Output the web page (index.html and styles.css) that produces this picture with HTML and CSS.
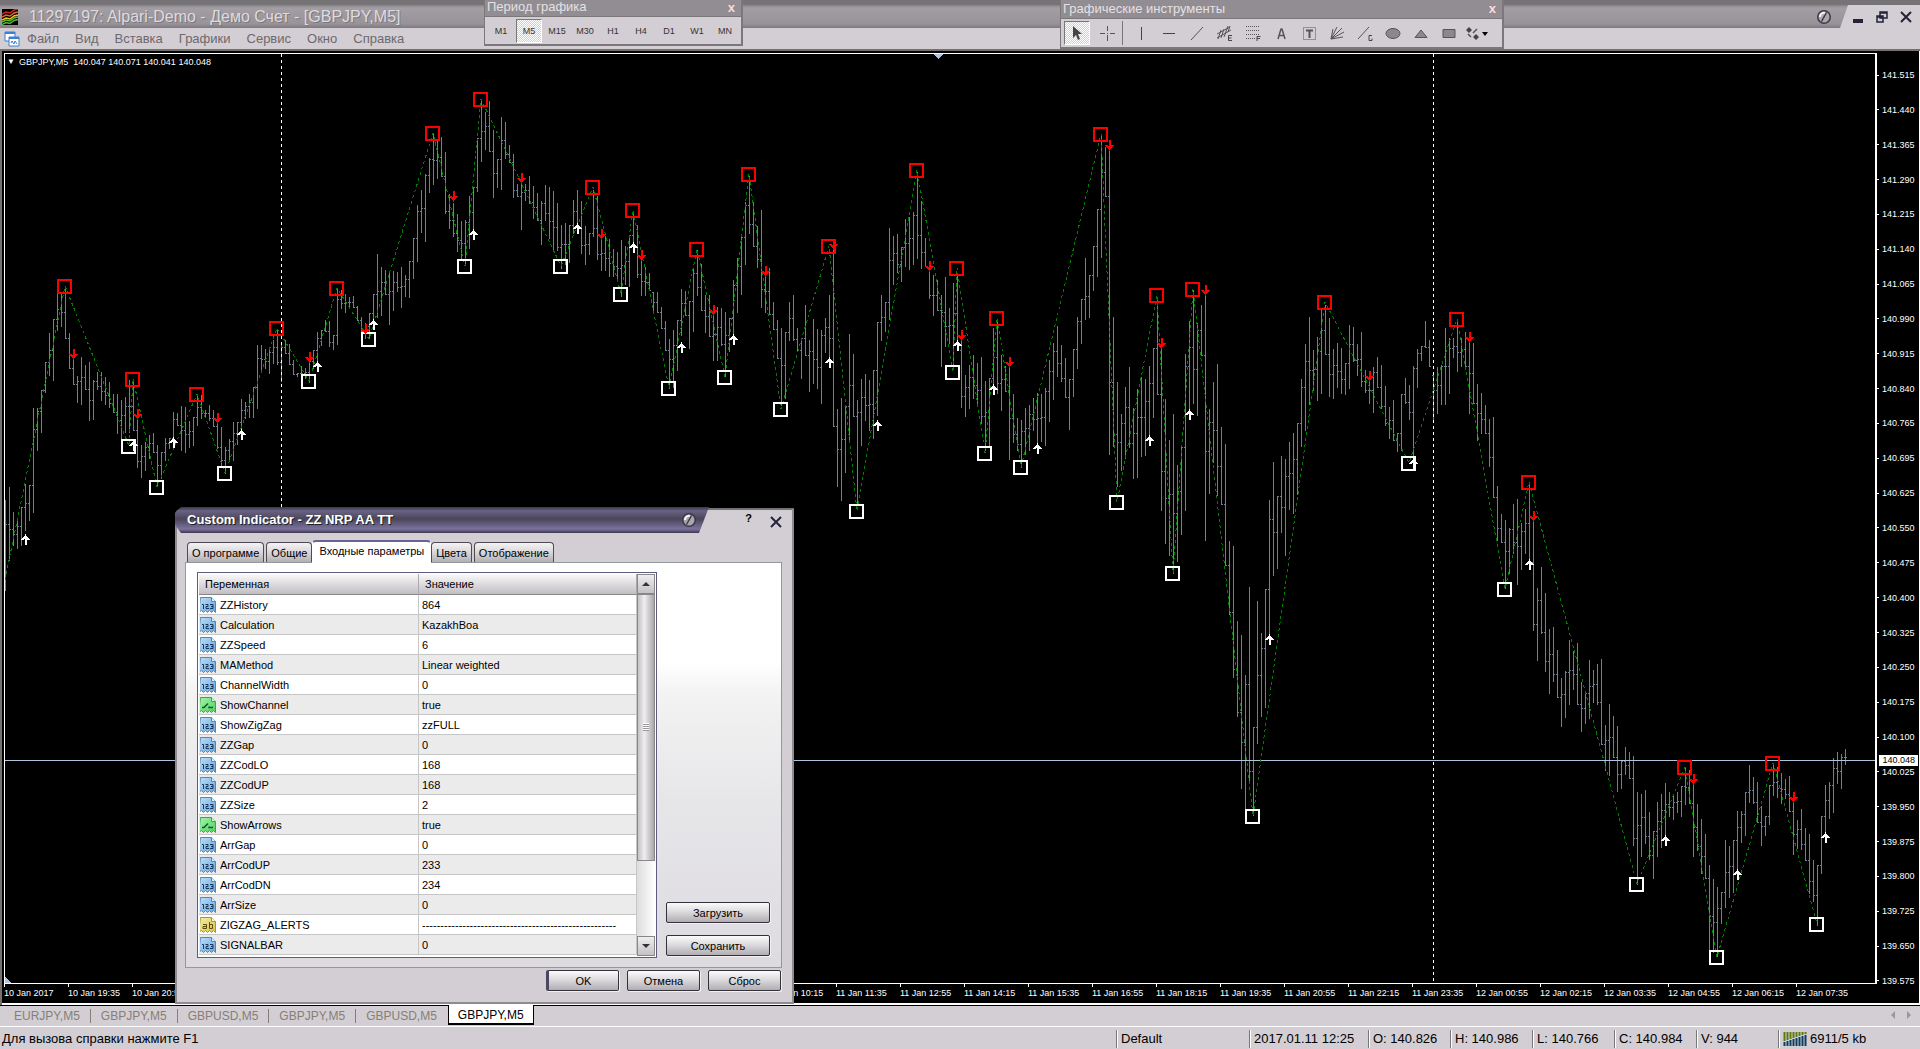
FILE: index.html
```html
<!DOCTYPE html>
<html lang="ru">
<head>
<meta charset="utf-8">
<title>11297197: Alpari-Demo - Демо Счет - [GBPJPY,M5]</title>
<link rel="stylesheet" href="styles.css">
</head>
<body>
<svg class="defs" aria-hidden="true">
  <defs>
    <linearGradient id="g-blue" x1="0" y1="0" x2="1" y2="1"><stop offset="0" stop-color="#bfe0f8"/><stop offset="1" stop-color="#6aa5da"/></linearGradient>
    <linearGradient id="g-green" x1="0" y1="0" x2="1" y2="1"><stop offset="0" stop-color="#a6f5ac"/><stop offset="1" stop-color="#4fcf62"/></linearGradient>
    <linearGradient id="g-yellow" x1="0" y1="0" x2="1" y2="1"><stop offset="0" stop-color="#f6efa8"/><stop offset="1" stop-color="#d6c350"/></linearGradient>
    <symbol id="i-num" viewBox="0 0 16 16"><path d="M.5.5h11l4 4v11l-2-2-2 2-2-2-2 2-2-2-2 2-2-2-3 2z" fill="url(#g-blue)" stroke="#4c87bd"/><path d="M11.500.5v4h4" fill="#e6f4ff" stroke="#4c87bd"/><path d="M2 7.500h1.500v4.500M5.500 7.500h2.500v2h-2v2h3M10 7.500h3v4h-3M11 9.500h2" fill="none" stroke="#17375c"/></symbol>
    <symbol id="i-bool" viewBox="0 0 16 16"><path d="M.5.5h11l4 4v11l-2-2-2 2-2-2-2 2-2-2-2 2-2-2-3 2z" fill="url(#g-green)" stroke="#35a94a"/><path d="M11.500.5v4h4" fill="#dfffe2" stroke="#35a94a"/><path d="M2 10.500h2l4-4M9 9.500v1h4" fill="none" stroke="#0b5c1e" stroke-width="1.500"/></symbol>
    <symbol id="i-str" viewBox="0 0 16 16"><path d="M.5.5h11l4 4v11l-2-2-2 2-2-2-2 2-2-2-2 2-2-2-3 2z" fill="url(#g-yellow)" stroke="#a8952f"/><path d="M11.500.5v4h4" fill="#fffbd6" stroke="#a8952f"/><path d="M3 7.500h3.500v4h-3.500v-2h3M9.500 5v6.500h3v-4h-3" fill="none" stroke="#5c4a0b"/></symbol>
    <symbol id="i-screw" viewBox="0 0 16 16"><circle cx="8" cy="8" r="7" fill="#3b3748"/><circle cx="8" cy="8" r="5.500" fill="#a9a7ab"/><path d="M4 8a4 4 0 0 1 5-4" stroke="#f4f4f4" stroke-width="2" fill="none"/><path d="M10.500 3.500 5.500 12.500" stroke="#3b3748" stroke-width="1.500"/></symbol>
  </defs>
</svg>

<header class="titlebar">
  <div class="caption">
    <svg class="applogo" viewBox="0 0 16 16"><path d="M0 0h16v16H0z" fill="#000"/><g fill="none" stroke-width="1.500"><path d="M0 5l4-2 4 1 4-3 4-1" stroke="#d4241c"/><path d="M0 8l4-2 4 1 4-3 4-1" stroke="#e8622a"/><path d="M0 11l4-2 4 1 4-3 4-1" stroke="#e8c62a"/><path d="M0 13l4-2 4 1 4-3 4-1M0 15.500l4-2 4 1 4-3 4-1" stroke="#58b838"/></g></svg>
    <h1>11297197: Alpari-Demo - Демо Счет - [GBPJPY,M5]</h1>
    <svg class="screw" viewBox="0 0 16 16"><use href="#i-screw"/></svg>
  </div>
  <div class="winbtns">
    <button aria-label="Свернуть"><svg viewBox="0 0 12 12"><path d="M1 8h10v4H1z" fill="#23233a"/></svg></button>
    <button aria-label="Восстановить"><svg viewBox="0 0 12 12"><path d="M4 1h7v6H4zM4 2h7M1 5h6v6H1zM1 6h6" fill="#d3ced3" stroke="#23233a" stroke-width="1.500"/></svg></button>
    <button aria-label="Закрыть"><svg viewBox="0 0 12 12"><path d="M1 1l10 10M11 1 1 11" stroke="#23233a" stroke-width="2"/></svg></button>
  </div>
</header>

<nav class="menubar">
  <svg class="docicon" viewBox="0 0 16 16"><path d="M1 1h10v9H1z" fill="#fff" stroke="#3f7fd0"/><path d="M1 2h10" stroke="#3f7fd0" stroke-width="2"/><path d="M5 6h10v9H5z" fill="#fff" stroke="#3f7fd0"/><path d="M5 7h10" stroke="#3f7fd0" stroke-width="2"/><path d="M7 12l1-2 2 3 1-3 2 3" fill="none" stroke="#3f7fd0"/></svg>
  <button>Файл</button><button>Вид</button><button>Вставка</button><button>Графики</button><button>Сервис</button><button>Окно</button><button>Справка</button>
</nav>

<section class="floatbar periods">
  <header><span>Период графика</span><button aria-label="Закрыть">x</button></header>
  <div class="tools"><button>M1</button><button class="on">M5</button><button>M15</button><button>M30</button><button>H1</button><button>H4</button><button>D1</button><button>W1</button><button>MN</button></div>
</section>

<section class="floatbar drawing">
  <header><span>Графические инструменты</span><button aria-label="Закрыть">x</button></header>
  <div class="tools">
    <button class="on" aria-label="Курсор"><svg viewBox="0 0 16 16"><path d="M4 1v12l3-3 2 5 2-1-2-5h4z" fill="#444"/></svg></button>
    <button class="cross" aria-label="Перекрестие"><svg viewBox="0 0 16 16"><path d="M8.500 1v5M8.500 10v6M1 8.500h5M11 8.500h5M8 8.500h1" stroke="#555"/></svg></button>
    <button aria-label="Вертикальная линия"><svg viewBox="0 0 16 16"><path d="M8.500 2v13" stroke="#444"/></svg></button>
    <button aria-label="Горизонтальная линия"><svg viewBox="0 0 16 16"><path d="M2 8.500h12" stroke="#444"/></svg></button>
    <button aria-label="Трендовая линия"><svg viewBox="0 0 16 16"><path d="M2 15 14 2" stroke="#555"/></svg></button>
    <button aria-label="Канал"><svg viewBox="0 0 16 16"><path d="M0 9 13 2M0 13 14 5M4 5 1 14M7 4 4 13M11 1 7 12M13 1l-2 6" fill="none" stroke="#555"/><path d="M15 10.500h-3.500v5H15M12 13h2.500" fill="none" stroke="#444"/></svg></button>
    <button aria-label="Линии Фибоначчи"><svg viewBox="0 0 16 16"><path d="M1 1.500h14M1 5.500h14M1 9.500h14M1 13.500h9" stroke="#555" stroke-dasharray="1 1"/><path d="M15.500 11.500h-3.500v4.500M12 13.500h3" fill="none" stroke="#444"/></svg></button>
    <button aria-label="Текст"><svg viewBox="0 0 16 16"><path d="M5 14 8 4h1l3 10M6 10.500h5" fill="none" stroke="#555" stroke-width="1.500" stroke-linejoin="bevel"/></svg></button>
    <button aria-label="Текстовая метка"><svg viewBox="0 0 16 16"><path d="M2.500 2.500h12v12h-12z" fill="none" stroke="#555" stroke-dasharray="1 1"/><path d="M5 5.500h7M8.500 5v8" stroke="#555" stroke-width="2"/></svg></button>
    <button aria-label="Веер"><svg viewBox="0 0 16 16"><path d="M2 14 4 4M2 14 8 2M2 14 13 3M2 14 15 7M2 14l12-2" stroke="#555"/></svg></button>
    <button aria-label="Линия Ганна"><svg viewBox="0 0 16 16"><path d="M1 14 12 2" stroke="#555"/><path d="M15 10.500h-3v5h3v-2" fill="none" stroke="#444"/></svg></button>
    <button aria-label="Эллипс"><svg viewBox="0 0 16 16"><ellipse cx="8" cy="8.500" rx="7" ry="5" fill="#8b888b" stroke="#555"/></svg></button>
    <button aria-label="Треугольник"><svg viewBox="0 0 16 16"><path d="M2 12.500 8 5l6 7.500z" fill="#8b888b" stroke="#555"/></svg></button>
    <button aria-label="Прямоугольник"><svg viewBox="0 0 16 16"><path d="M2 4.500h12v8H2z" fill="#8b888b" stroke="#555"/></svg></button>
    <button class="wide" aria-label="Стрелки"><svg viewBox="0 0 24 16"><path d="M4 2l3 3-3 3-3-3zM11 9l3 3-3 3-3-3z" fill="#444"/><path d="M3 9l3 3M8 8l4-4" stroke="#555" stroke-width="1.500"/><path d="M17 7h6l-3 4z" fill="#000"/></svg></button>
  </div>
</section>

<main class="workspace">
  <div class="chart">
    <div class="plot">
      <svg id="canvas" viewBox="5 54 1870 929" preserveAspectRatio="none" shape-rendering="crispEdges" role="img" aria-label="GBPJPY,M5"></svg>
      <p class="quote"><span>▼</span>GBPJPY,M5&nbsp; 140.047 140.071 140.041 140.048</p>
    </div>
    <ol class="prices" id="prices"></ol>
    <ol class="times" id="times"></ol>
    <output class="lastprice">140.048</output>
  </div>
</main>

<section class="dialog" role="dialog" aria-label="Custom Indicator">
  <header class="dlg-head">
    <div class="dlg-title"><h2>Custom Indicator - ZZ NRP AA TT</h2><svg viewBox="0 0 16 16"><use href="#i-screw"/></svg></div>
    <button class="help">?</button>
    <button class="close" aria-label="Закрыть"><svg viewBox="0 0 12 12"><path d="M1 1l10 10M11 1 1 11" stroke="#23233a" stroke-width="2"/></svg></button>
  </header>
  <div class="tabs" role="tablist">
    <button role="tab">О программе</button><button role="tab">Общие</button><button role="tab" class="current" aria-selected="true">Входные параметры</button><button role="tab">Цвета</button><button role="tab">Отображение</button>
  </div>
  <div class="pane">
    <div class="grid">
      <table>
        <thead><tr><th class="name">Переменная</th><th>Значение</th></tr></thead>
        <tbody>
          <tr><td><svg><use href="#i-num"/></svg>ZZHistory</td><td>864</td></tr>
          <tr><td><svg><use href="#i-num"/></svg>Calculation</td><td>KazakhBoa</td></tr>
          <tr><td><svg><use href="#i-num"/></svg>ZZSpeed</td><td>6</td></tr>
          <tr><td><svg><use href="#i-num"/></svg>MAMethod</td><td>Linear weighted</td></tr>
          <tr><td><svg><use href="#i-num"/></svg>ChannelWidth</td><td>0</td></tr>
          <tr><td><svg><use href="#i-bool"/></svg>ShowChannel</td><td>true</td></tr>
          <tr><td><svg><use href="#i-num"/></svg>ShowZigZag</td><td>zzFULL</td></tr>
          <tr><td><svg><use href="#i-num"/></svg>ZZGap</td><td>0</td></tr>
          <tr><td><svg><use href="#i-num"/></svg>ZZCodLO</td><td>168</td></tr>
          <tr><td><svg><use href="#i-num"/></svg>ZZCodUP</td><td>168</td></tr>
          <tr><td><svg><use href="#i-num"/></svg>ZZSize</td><td>2</td></tr>
          <tr><td><svg><use href="#i-bool"/></svg>ShowArrows</td><td>true</td></tr>
          <tr><td><svg><use href="#i-num"/></svg>ArrGap</td><td>0</td></tr>
          <tr><td><svg><use href="#i-num"/></svg>ArrCodUP</td><td>233</td></tr>
          <tr><td><svg><use href="#i-num"/></svg>ArrCodDN</td><td>234</td></tr>
          <tr><td><svg><use href="#i-num"/></svg>ArrSize</td><td>0</td></tr>
          <tr><td><svg><use href="#i-str"/></svg>ZIGZAG_ALERTS</td><td>-----------------------------------------------------</td></tr>
          <tr><td><svg><use href="#i-num"/></svg>SIGNALBAR</td><td>0</td></tr>
        </tbody>
      </table>
      <div class="scroll"><button aria-label="Вверх"><i class="up"></i></button><div class="thumb"><i></i></div><div class="track"></div><button aria-label="Вниз"><i class="down"></i></button></div>
    </div>
    <div class="side"><button class="btn">Загрузить</button><button class="btn">Сохранить</button></div>
  </div>
  <footer><button class="btn default">OK</button><button class="btn">Отмена</button><button class="btn">Сброс</button></footer>
</section>

<nav class="charttabs">
  <button>EURJPY,M5</button><button>GBPJPY,M5</button><button>GBPUSD,M5</button><button>GBPJPY,M5</button><button>GBPUSD,M5</button><button class="current">GBPJPY,M5</button>
  <span class="pager"><i class="prev"></i><i class="next"></i></span>
</nav>

<footer class="status">
  <span class="hint">Для вызова справки нажмите F1</span>
  <span class="profile">Default</span>
  <span class="date">2017.01.11 12:25</span>
  <span>O: 140.826</span><span>H: 140.986</span><span>L: 140.766</span><span>C: 140.984</span><span>V: 944</span>
  <span class="traffic"><svg viewBox="0 0 24 14"><path d="M1.500 0v9M4.500 0v8M7.500 0v7M10.500 0v6M13.500 0v5M16.500 0v4M19.500 0v3M22.500 0v2" stroke="#5f7a12" stroke-width="2"/><path d="M1.500 10v4M4.500 9v5M7.500 8v6M10.500 7v7M13.500 6v8M16.500 5v9M19.500 4v10M22.500 3v11" stroke="#0d3f63" stroke-width="2"/></svg>6911/5 kb</span>
</footer>
<script src="chart.js"></script>
</body>
</html>
```
FILE: styles.css
```css
* { box-sizing: border-box; }
body { margin: 0; height: 100vh; display: flex; flex-direction: column; position: relative; overflow: hidden; background: #d3ced3; color: #000; font: 13px/16px "Liberation Sans", Arial, sans-serif; }
button { font: inherit; color: inherit; background: none; border: 0; padding: 0; margin: 0; }
h1, h2, p, ol { margin: 0; padding: 0; font-weight: normal; list-style: none; }
svg { display: block; flex: none; }
.defs { position: absolute; width: 0; height: 0; }

.titlebar { display: flex; height: 28px; border-top: 5px solid #757375; flex: none; }
.caption { flex: 1; display: flex; align-items: center; gap: 11px; padding: 0 16px 0 2px; background: linear-gradient(#858185, #a39ea3 3px, #989398 19px, #7d797d 23px); clip-path: polygon(0 0, 100% 0, calc(100% - 8px) 100%, 0 100%); }
.caption h1 { flex: 1; color: #dedbde; font-size: 16px; line-height: 20px; text-shadow: 1px 1px #7d787d; }
.applogo, .screw, .docicon { width: 16px; height: 16px; }
.winbtns { width: 72px; display: flex; justify-content: space-between; align-items: center; padding: 0 8px 0 4px; }
.winbtns svg, .close svg { width: 12px; height: 12px; }

.menubar { height: 23px; flex: none; display: flex; align-items: center; gap: 16px; padding: 0 4px; color: #6d696d; border-bottom: 2px solid #74716f; }
.docicon { margin-right: -9px; }

.floatbar { position: absolute; top: 0; z-index: 2; background: #d3ced3; border: solid #7b777b; border-width: 0 2px 2px 1px; }
.floatbar header { display: flex; justify-content: space-between; padding: 0 6px 0 2px; background: #928d92; border-bottom: 1px solid #7b777b; color: #e4e1e4; height: 17px; line-height: 14px; }
.floatbar header button { color: #ffdada; font-weight: bold; line-height: 12px; }
.floatbar .tools { display: flex; align-items: center; height: 27px; padding: 0 2px; }
.floatbar .tools button { width: 28px; height: 24px; font-size: 9px; color: #333; display: grid; place-items: center; }
.floatbar .tools .on { border: 1px solid #fff; border-top-color: #777; border-left-color: #777; background: repeating-conic-gradient(#fff 0 25%, #d3ced3 0 50%) 0 0 / 2px 2px; width: 26px; margin: 0 1px; }
.floatbar .tools svg { width: 16px; height: 16px; }
.floatbar .tools .wide svg { width: 24px; }
.floatbar .tools .cross { width: 32px; border-right: 1px solid #777; margin-right: 4px; }
.periods { left: 484px; width: 259px; }
.drawing { left: 1060px; width: 444px; }
.drawing header { height: 19px; line-height: 18px; }
.drawing .tools { height: 28px; }

.workspace { flex: 1; min-height: 0; padding: 0 1px 2px 2px; background: #fff; display: flex; box-shadow: inset 2px 0 #74716f; }
.chart { flex: 1; position: relative; display: grid; grid-template-columns: 1fr 42px; grid-template-rows: 1fr 19px; background: #000; color: #fff; padding: 2px 0 0 2px; font-size: 9px; line-height: 12px; }
.plot { position: relative; border: 1px solid #fff; border-right-width: 2px; min-height: 0; }
.plot svg { width: 100%; height: 100%; }
.quote { position: absolute; left: 2px; top: 2px; display: flex; gap: 4px; }
.quote span { font-size: 8px; }
.prices { display: flex; flex-direction: column; justify-content: space-between; padding: 16px 0 0; margin-bottom: -3px; }
.prices li { display: flex; align-items: center; gap: 3px; }
.prices li::before { content: ""; width: 2px; height: 1px; background: #fff; }
.times { grid-column: 1 / 3; display: flex; min-width: 0; }
.times li { flex: 0 0 64px; white-space: nowrap; }
.times li::before { content: ""; display: block; width: 1px; height: 3px; background: #fff; }
.lastprice { position: absolute; right: 1px; top: 704px; background: #fff; color: #000; padding: 0 3px; line-height: 11px; }

.dialog { position: absolute; left: 175px; top: 508px; width: 619px; height: 496px; background: #d3ced3; border: 2px solid #8e8c8e; border-top-color: #757375; border-radius: 8px 0 0 0; font-size: 11px; display: flex; flex-direction: column; }
.dlg-head { display: flex; align-items: center; height: 24px; margin: -2px 0 0 -2px; padding-right: 10px; gap: 18px; flex: none; }
.dlg-title { width: 534px; height: 26px; display: flex; justify-content: space-between; align-items: center; padding: 0 12px 0 12px; background: linear-gradient(#3b3748, #6a6284 4px, #4a4558 12px, #7b73a0 22px, #3b3748); clip-path: polygon(6px 0, 100% 0, calc(100% - 10px) 100%, 6px 100%, 0 18px, 0 6px); color: #fff; }
.dlg-title h2 { font-size: 13px; font-weight: bold; text-shadow: 1px 1px #222; }
.dlg-title svg { width: 16px; height: 16px; }
.help { font-weight: bold; margin-left: auto; margin-bottom: 4px; }
.close { margin-top: 4px; }
.tabs { display: flex; align-items: flex-end; height: 22px; margin: 8px 0 0 10px; gap: 2px; flex: none; }
.tabs button { height: 20px; padding: 0 4px; border: 1px solid #4e4c4e; border-bottom: 0; border-radius: 4px 4px 0 0; background: linear-gradient(#f4f3f4, #d9d6d9 50%, #b3afb3); white-space: nowrap; }
.tabs .current { height: 23px; padding: 0 6px 3px; margin: 0 -2px -1px; background: #fff; border-color: #fff; border-top: 2px solid #6a6292; position: relative; }
.pane { flex: 1; min-height: 0; margin: 0 10px 0 8px; border: 1px solid #909a9c; background: linear-gradient(#fff 100px, #f3f3f3 130px, #e6e5e8 240px, #dddbe0); display: flex; padding: 9px 11px; gap: 9px; }
.grid { width: 460px; border: 1px solid #5d5b7e; background: #fff; display: flex; padding: 1px; }
.grid table { flex: 1; align-self: flex-start; border-collapse: separate; border-spacing: 0; table-layout: fixed; }
.grid th { height: 21px; text-align: left; font-weight: normal; padding: 0 0 0 6px; background: linear-gradient(#fafafa, #dedbde 50%, #c2bec4); border-bottom: 1px solid #888; border-right: 1px solid #aaa; }
.grid .name { width: 220px; }
.grid td { height: 20px; padding: 0 0 0 3px; border-bottom: 1px solid #c6c6c6; border-right: 1px solid #c6c6c6; line-height: 16px; white-space: nowrap; overflow: hidden; }
.grid tr:nth-child(even) td { background: #ebebeb; }
.grid td:first-child { padding-left: 1px; }
.grid td svg { width: 16px; height: 16px; float: left; margin-right: 4px; }
.scroll { width: 18px; display: flex; flex-direction: column; background: linear-gradient(90deg, #ddd, #fff); }
.scroll button { height: 20px; border: 1px solid #8a878a; background: linear-gradient(#eee, #c5c1c5); display: grid; place-items: center; }
.scroll i.up, .scroll i.down { border: 4px solid transparent; border-top: 0; border-bottom: 4px solid #333; }
.scroll i.down { border-bottom: 0; border-top: 4px solid #333; }
.thumb { flex: 267; border: 1px solid #8a878a; background: linear-gradient(90deg, #c5c1c5, #f0eef0 40%, #aaa6ac); display: grid; place-items: center; }
.thumb i { width: 6px; height: 8px; background: repeating-linear-gradient(#fff 0 1px, #999 1px 2px); }
.track { flex: 76; }
.side { flex: 1; display: flex; flex-direction: column; justify-content: flex-end; gap: 12px; padding-bottom: 2px; }
.btn { height: 21px; border: 1px solid #33323a; border-radius: 2px; background: linear-gradient(#fbfbfb, #d9d7da 50%, #b1adb3); box-shadow: 1px 1px #f3f1f3; }
.dialog footer { display: flex; justify-content: flex-end; gap: 8px; padding: 2px 11px 11px; flex: none; }
.dialog footer .btn { width: 73px; }
.dialog footer .default { border-left: 3px solid #4a4760; }

.charttabs { height: 22px; flex: none; display: flex; align-items: flex-start; border-top: 1px solid #000; border-bottom: 1px solid #fff; padding-left: 4px; color: #857f76; font-size: 12px; }
.charttabs button { padding: 0 10px; height: 14px; margin-top: 3px; border-right: 1px solid #857f76; line-height: 14px; }
.charttabs button:nth-last-child(3) { border-right-color: transparent; }
.charttabs .current { background: #fff; color: #000; border: 1px solid #000; border-width: 0 1px 2px; margin-top: -1px; height: 20px; line-height: 20px; padding: 0 9px; }
.pager { margin-left: auto; display: flex; gap: 12px; padding: 5px 9px 0 0; }
.pager i { border: 4px solid transparent; border-left: 0; border-right: 4px solid #9a969a; }
.pager i.next { border-right: 0; border-left: 4px solid #9a969a; }

.status { height: 22px; flex: none; display: flex; align-items: center; padding-top: 2px; }
.status span { flex: 0 0 82px; padding-left: 4px; line-height: 18px; white-space: nowrap; border-left: 1px solid #777; box-shadow: inset 1px 0 #fff; }
.status .hint { flex: 1; border: 0; padding-left: 2px; box-shadow: none; }
.status .profile { flex-basis: 133px; }
.status .date { flex-basis: 119px; }
.status .traffic { flex-basis: 142px; display: flex; align-items: center; gap: 3px; }
.traffic svg { width: 24px; height: 14px; }
```
FILE: chart.js
```js
// Bar ranges as "high-low" pairs, one bar every 4 units starting at x = 5.
const bars = `500-590 487-560 512-545 520-548 507-545 484-530 485-520 408-512 408-450 390-432 362-392 333-375 319-380 292-330 292-326 286-338 333-368 358-384 376-402 357-404 365-389 362-420 380-419 372-389 372-400 377-404 382-407 394-412 394-433 400-440 397-432 380-432 382-430 418-467 445-477 442-470 435-458 433-452 445-485 452-478 438-460 438-448 412-447 413-425 406-450 407-452 421-447 417-445 394-425 395-418 410-416 405-420 410-426 422-448 427-466 447-473 439-461 422-460 422-444 399-432 402-418 394-417 387-417 345-408 345-371 349-368 348-373 340-363 329-364 343-381 340-353 344-364 360-374 373-376 366-376 368-378 361-382 350-368 332-364 330-345 320-331 321-346 335-349 288-344 290-308 294-312 297-307 296-307 306-320 317-332 323-338 313-338 294-325 254-317 267-315 270-294 273-324 271-310 272-291 267-307 275-296 261-297 238-278 205-261 190-232 174-241 158-192 133-184 141-178 137-176 152-213 194-228 203-236 214-251 221-258 220-265 196-248 187-236 138-191 100-161 112-149 101-151 130-197 159-187 117-189 122-158 145-162 154-197 184-196 180-229 184-200 176-203 186-218 193-220 201-244 185-220 187-238 191-250 203-250 225-268 223-264 225-262 200-233 190-232 201-253 226-264 233-254 190-236 196-259 238-270 236-270 239-276 249-276 252-280 240-296 246-284 235-286 213-247 225-277
252-295 267-295 273-290 292-310 292-312 307-328 321-350 339-388 330-387 320-370 289-335 291-315 301-348 269-331 250-295 264-310 295-332 295-336 313-360 307-360 308-345 312-376 318-351 280-335 258-312 237-294 202-264 176-233 202-246 226-267 210-307 266-312 268-314 302-329 320-358 328-405 332-398 302-340 295-340 328-350 338-378 305-355 340-391 319-383 329-388 330-403 318-352 295-358 250-426 409-486 398-500 406-472 334-441 354-416 400-505 379-445 374-420 380-430 370-438 322-415 295-340 302-331 228-319 236-284 234-272 247-281 219-266 217-269 212-264 172-258 201-268 238-266 269-298 275-315 280-310 295-366 277-346 308-343 283-367 275-350 340-407 375-416 365-408 355-398 363-406 357-423 381-450 378-446 328-390 321-393 355-410 366-391 367-459 394-442 418-450 420-467 408-454 405-450 398-430 393-444 394-441 388-445 360-421 343-399 326-376 345-381 358-397 379-429 349-396 317-368 299-343 258-319 275-317 246-290 209-276 135-257 147-196 150-454 317-446 382-486 414-470 387-458 367-447 408-478 389-477
377-456 379-455 366-436 348-417 299-394 347-510 399-543 440-555 414-573 465-561 447-534 354-510 321-410 290-403 323-415 305-355 293-540 409-493 382-462 364-495 427-504 444-565 541-614 546-677 621-716 635-788 675-808 587-780 727-815 601-743 633-716 589-707 500-637 462-575 496-568 456-532 459-555 442-509 433-513 423-494 379-446 344-430 317-404 350-390 337-400 309-393 305-354 318-396 349-398 343-387 348-393 363-394 325-388 327-361 344-375 332-386 370-392 376-403 367-412 357-387 365-408 386-425 407-438 400-440 433-451 394-450 378-403 385-419 366-457 349-387 346-360 321-347 340-366 375-422 367-413 365-404 328-404 338-393 338-357 320-371 338-366 332-366 341-413 343-403 384-440 393-433 405-433 419-466 417-497 486-540 514-542 520-588 528-573 504-553 499-584 523-569 509-553 483-562 521-630 588-660 567-633 593-671 629-693 627-681 650-697 678-726 671-717 640-704 651-689 643-704 682-731 693-723 660-718 670-702 664-704 659-744 725-770 704-775 716-757 726-791 760-788 747-774 752-778 756-845 792-884 794-856 790-843 812-859 831-878 802-856 794-847 783-836 792-816 794-819 792-812 786-816 767-804 770-803 783-856 804-850 819-873 834-878 865-950 879-952 887-956 892-923 840-907 846-897 840-892 811-869 811-842 792-835 765-802 777-803 782-822 806-845 816-835 785-824 764-795 767-797 773-803 779-798 776-811 798-854 820-848 809-849 828-860 834-893 860-901 865-925 816-873 785-832 782-818 758-812 752-783 754-788 749-764`
  .trim().split(/\s+/).map((s) => s.split('-').map(Number));

const points = (s) => s.split(' ').map((p) => p.split(',').map(Number));

const zigzag = '5,580 65,286 129,446 133,379 157,487 197,394 225,473 277,328 309,381 337,288 369,339 433,133 465,266 481,99 561,266 593,187 621,294 633,210 669,388 697,249 725,377 749,174 781,409 829,246 857,511 917,170 953,372 957,268 985,453 997,318 1021,467 1101,134 1117,502 1157,295 1173,573 1193,289 1253,816 1325,302 1409,463 1457,319 1505,589 1529,482 1637,884 1685,767 1717,957 1773,763 1817,924';
const tops = points('64,286 132,379 196,394 276,328 336,288 432,133 480,99 592,187 632,210 696,249 748,174 828,246 916,170 956,268 996,318 1100,134 1156,295 1192,289 1324,302 1456,319 1528,482 1684,767 1772,763');
const bottoms = points('128,446 156,487 224,473 308,381 368,339 464,266 560,266 620,294 668,388 724,377 780,409 856,511 952,372 984,453 1020,467 1116,502 1172,573 1252,816 1408,463 1504,589 1636,884 1716,957 1816,924');
const sells = points('73,354 137,414 217,418 309,357 365,329 453,196 521,178 601,234 641,255 713,310 765,271 833,244 929,266 961,335 1009,362 1109,145 1161,343 1205,290 1369,376 1469,337 1533,516 1693,779 1793,797');
const buys = points('25,540 133,446 173,443 241,435 317,367 373,325 473,235 577,229 633,248 681,348 733,340 829,363 877,426 957,346 993,390 1037,449 1149,441 1189,415 1269,640 1413,464 1529,565 1665,841 1737,875 1825,838');

let barPath = '';
let lastClose = bars[0][1];
bars.forEach(([high, low], i) => {
  const x = 5 + i * 4;
  const next = bars[Math.min(i + 1, bars.length - 1)];
  const clamp = (v) => Math.round(Math.max(high, Math.min(low, v)));
  const close = clamp((next[0] + next[1]) / 2);
  barPath += `M${x} ${high}h1V${low + 1}h-1zM${x - 1} ${clamp(lastClose)}h1v1h-1zM${x + 1} ${close}h1v1h-1z`;
  lastClose = close;
});

const boxes = (list) => list.map(([x, y]) => `M${x - 6} ${y - 6}h13v13h-13z`).join('');
const down = ([x, y]) => `M${x + 0.5} ${y - 5}v9M${x - 3} ${y}l3.500 4 3.500 -4`;
const up = ([x, y]) => `M${x + 0.5} ${y + 5}v-9M${x - 3} ${y}l3.500 -4 3.500 4`;

document.getElementById('canvas').innerHTML = `
  <path d="${barPath}" fill="#708090"/>
  <path d="M281.500 54V983M1433.500 54V983" stroke="#fff" stroke-dasharray="3 3"/>
  <path d="M5 760.500H1875" stroke="#b0c4de"/>
  <polyline points="${zigzag}" fill="none" stroke="#008000" stroke-dasharray="3 3"/>
  <path d="${boxes(tops)}" fill="none" stroke="#f00" stroke-width="2"/>
  <path d="${boxes(bottoms)}" fill="none" stroke="#fff" stroke-width="2"/>
  <path d="${sells.map(down).join('')}" fill="none" stroke="#f00" stroke-width="2"/>
  <path d="${buys.map(up).join('')}" fill="none" stroke="#fff" stroke-width="2"/>
  <path d="M933 54h10l-5 5zM5 977v6h6z" fill="#b0c4de"/>`;

const prices = '141.515 141.440 141.365 141.290 141.215 141.140 141.065 140.990 140.915 140.840 140.765 140.695 140.625 140.550 140.475 140.400 140.325 140.250 140.175 140.100 140.025 139.950 139.875 139.800 139.725 139.650 139.575';
document.getElementById('prices').innerHTML = prices.split(' ').map((p) => `<li>${p}</li>`).join('');

// One time label every 80 minutes; the first one shows the year.
const start = Date.UTC(2017, 0, 10, 18, 15);
let times = '<li>10 Jan 2017</li>';
for (let i = 1; i < 29; i++) {
  const iso = new Date(start + i * 80 * 60000).toISOString();
  times += `<li>${iso.slice(8, 10)} Jan ${iso.slice(11, 16)}</li>`;
}
document.getElementById('times').innerHTML = times;
```
